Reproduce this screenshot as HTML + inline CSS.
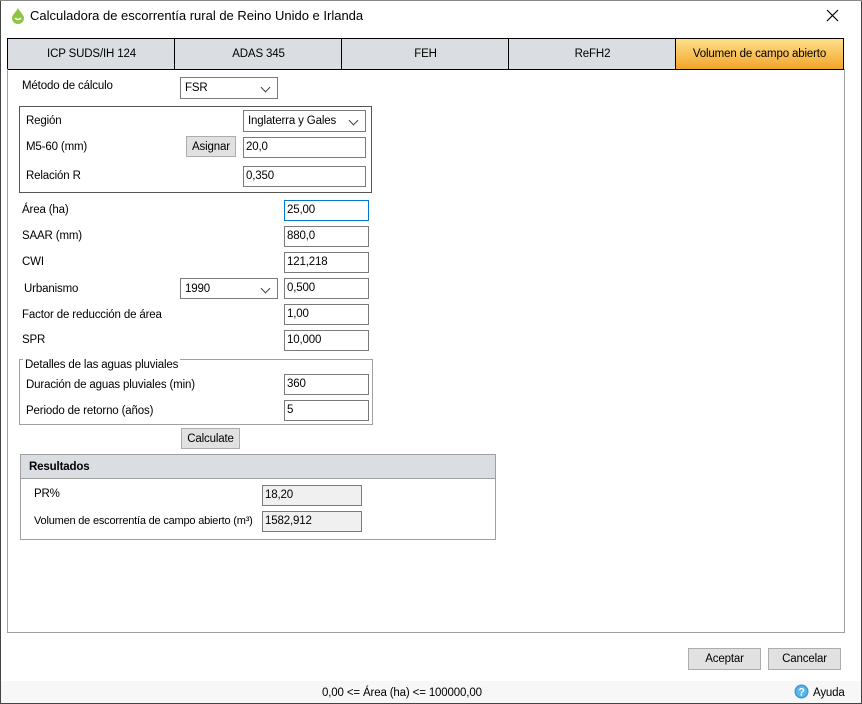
<!DOCTYPE html>
<html><head><meta charset="utf-8"><style>
*{box-sizing:border-box;margin:0;padding:0}
body{width:862px;height:704px;position:relative;background:#fff;font-family:"Liberation Sans",Arial,sans-serif;font-size:11.5px;letter-spacing:-0.15px;color:#000;overflow:hidden}
.a{position:absolute;white-space:nowrap}
.in{position:absolute;border:1px solid #7a7a7a;background:#fff;padding:3px 0 0 2px;height:21px}
.ro{background:#f0f0f0}
.cb{position:absolute;border:1px solid #7a7a7a;background:#fff;padding:4px 0 0 4px;height:22px}
.cb:after{content:"";position:absolute;right:8px;top:6px;width:6px;height:6px;border-right:1px solid #444;border-bottom:1px solid #444;transform:rotate(45deg)}
.btn{position:absolute;border:1px solid #adadad;background:#e1e1e1;text-align:center;padding-top:4px;height:21px}
.tab{position:absolute;top:38px;height:32px;border:1px solid #000;border-right:none;background:#dadde1;text-align:center;line-height:30px}
</style></head><body>
<div class="a" style="left:0;top:0;width:1px;height:704px;background:#444"></div>
<div class="a" style="right:0;top:0;width:1px;height:704px;background:#444"></div>
<div class="a" style="left:0;top:0;width:862px;height:1px;background:#888"></div>
<div class="a" style="left:0;bottom:0;width:862px;height:1px;background:#444"></div>
<svg class="a" style="left:11px;top:7px" width="14" height="17" viewBox="0 0 14 17"><path d="M7 1 C9 5 13 8 13 11 A6 6 0 0 1 1 11 C1 8 5 5 7 1Z" fill="#8cc63f"/><path d="M4 11 Q7 14 10 11" stroke="#fff" stroke-width="1.5" fill="none"/></svg>
<div class="a" style="left:30px;top:8px;font-size:13px;letter-spacing:0">Calculadora de escorrentía rural de Reino Unido e Irlanda</div>
<svg class="a" style="left:826px;top:9px" width="13" height="13"><path d="M1 1L12 12M12 1L1 12" stroke="#000" stroke-width="1.2"/></svg>

<div class="tab" style="left:7px;width:168px">ICP SUDS/IH 124</div>
<div class="tab" style="left:174px;width:168px">ADAS 345</div>
<div class="tab" style="left:341px;width:168px">FEH</div>
<div class="tab" style="left:508px;width:168px">ReFH2</div>
<div class="tab" style="left:675px;width:169px;border-right:1px solid #000;background:linear-gradient(#fde08a,#f3a42a)">Volumen de campo abierto</div>
<div class="a" style="left:7px;top:69px;width:838px;height:564px;border:1px solid #a0a0a0;border-top:none"></div>

<div class="a" style="left:22px;top:80px">Método de cálculo</div>
<div class="cb" style="left:180px;top:77px;width:98px">FSR</div>

<div class="a" style="left:19px;top:106px;width:353px;height:87px;border:1px solid #555"></div>
<div class="a" style="left:26px;top:115px">Región</div>
<div class="cb" style="left:243px;top:110px;width:123px">Inglaterra y Gales</div>
<div class="a" style="left:26px;top:141px">M5-60 (mm)</div>
<div class="btn" style="left:186px;top:136px;width:50px">Asignar</div>
<div class="in" style="left:243px;top:137px;width:123px">20,0</div>
<div class="a" style="left:26px;top:170px">Relación R</div>
<div class="in" style="left:243px;top:166px;width:123px">0,350</div>

<div class="a" style="left:22px;top:204px">Área (ha)</div>
<div class="in" style="left:284px;top:200px;width:85px;border-color:#0078d7">25,00</div>
<div class="a" style="left:22px;top:230px">SAAR (mm)</div>
<div class="in" style="left:284px;top:226px;width:85px">880,0</div>
<div class="a" style="left:22px;top:256px">CWI</div>
<div class="in" style="left:284px;top:252px;width:85px">121,218</div>
<div class="a" style="left:24px;top:283px">Urbanismo</div>
<div class="cb" style="left:180px;top:278px;width:98px;height:21px">1990</div>
<div class="in" style="left:284px;top:278px;width:85px">0,500</div>
<div class="a" style="left:22px;top:309px">Factor de reducción de área</div>
<div class="in" style="left:284px;top:304px;width:85px">1,00</div>
<div class="a" style="left:22px;top:334px">SPR</div>
<div class="in" style="left:284px;top:330px;width:85px">10,000</div>

<div class="a" style="left:19px;top:359px;width:354px;height:66px;border:1px solid #a0a0a0"></div>
<div class="a" style="left:23px;top:359px;padding:0 2px;background:#fff">Detalles de las aguas pluviales</div>
<div class="a" style="left:26px;top:379px">Duración de aguas pluviales (min)</div>
<div class="in" style="left:284px;top:374px;width:85px">360</div>
<div class="a" style="left:26px;top:405px">Periodo de retorno (años)</div>
<div class="in" style="left:284px;top:400px;width:85px">5</div>
<div class="btn" style="left:181px;top:428px;width:59px">Calculate</div>

<div class="a" style="left:20px;top:454px;width:476px;height:86px;border:1px solid #a0a0a0"></div>
<div class="a" style="left:21px;top:455px;width:474px;height:24px;background:#dadde1;border-bottom:1px solid #a0a0a0"></div>
<div class="a" style="left:29px;top:461px;font-weight:bold">Resultados</div>
<div class="a" style="left:34px;top:488px">PR%</div>
<div class="in ro" style="left:262px;top:485px;width:100px">18,20</div>
<div class="a" style="left:34px;top:515px;font-size:11px;letter-spacing:-0.2px">Volumen de escorrentía de campo abierto (m³)</div>
<div class="in ro" style="left:262px;top:511px;width:100px">1582,912</div>

<div class="btn" style="left:688px;top:648px;width:73px;height:22px">Aceptar</div>
<div class="btn" style="left:768px;top:648px;width:73px;height:22px">Cancelar</div>

<div class="a" style="left:1px;top:681px;width:860px;height:22px;background:#f7f7f7"></div>
<div class="a" style="left:322px;top:687px">0,00 &lt;= Área (ha) &lt;= 100000,00</div>
<svg class="a" style="left:794px;top:684px" width="15" height="15"><circle cx="7.5" cy="7.5" r="7" fill="#3a9ad9"/><circle cx="7.5" cy="7.5" r="5.5" fill="#5bb5ee"/><text x="7.5" y="11.5" font-size="11" font-weight="bold" text-anchor="middle" fill="#fff" font-family="Liberation Sans">?</text></svg>
<div class="a" style="left:813px;top:687px">Ayuda</div>
</body></html>
